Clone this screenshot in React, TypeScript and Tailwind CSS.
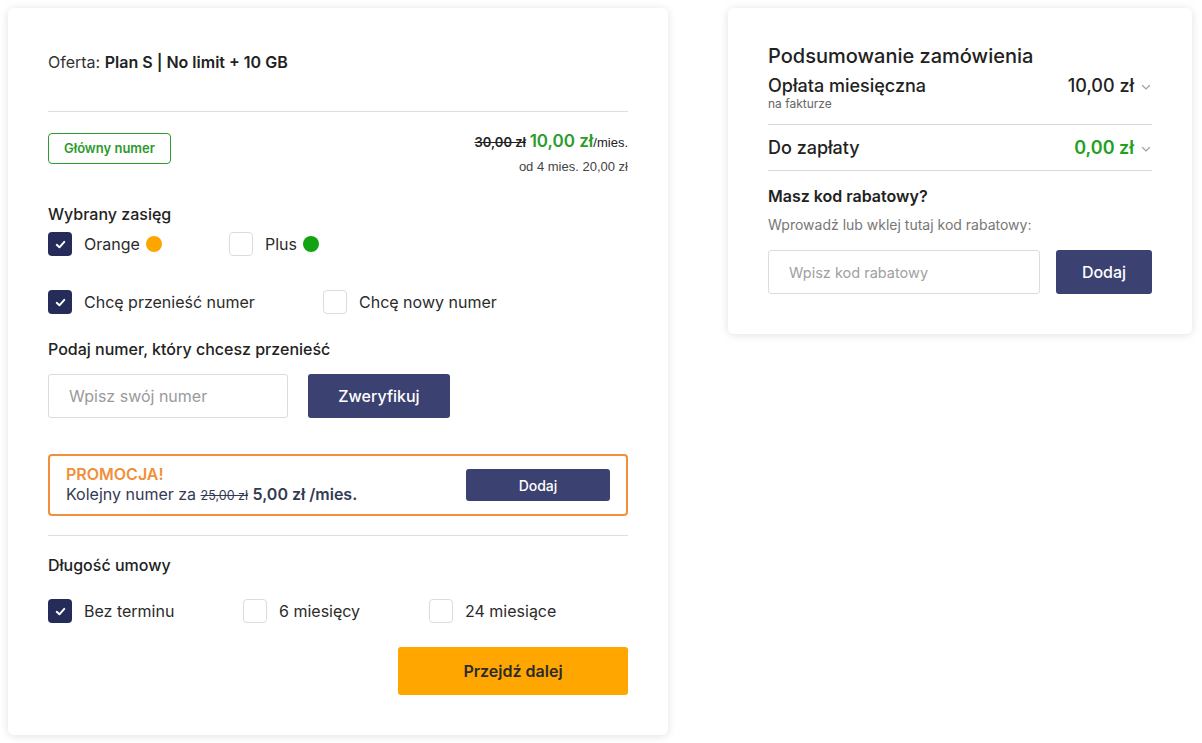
import React from 'react';

const Check = ({ checked }: { checked?: boolean }) =>
  checked ? (
    <span className="flex h-6 w-6 shrink-0 items-center justify-center rounded-[4px] bg-[#262c5a]">
      <svg viewBox="0 0 12 12" className="h-[13px] w-[13px]" fill="none" stroke="white" strokeWidth="1.8" strokeLinecap="round" strokeLinejoin="round">
        <path d="M2.5 6.3 5 8.6 9.5 3.6" />
      </svg>
    </span>
  ) : (
    <span className="h-6 w-6 shrink-0 rounded-[4px] border border-[#dcdcdc] bg-white" />
  );

const Option = ({ label, checked, className, children }: { label: string; checked?: boolean; className?: string; children?: React.ReactNode }) => (
  <label className={`flex items-center gap-3 text-[16px] leading-6 text-[#2b2b2b] ${className ?? ''}`}>
    <Check checked={checked} />
    <span>{label}</span>
    {children}
  </label>
);

const Chevron = () => (
  <svg viewBox="0 0 12 12" className="ml-1.5 mt-[2px] h-3 w-3" fill="none" stroke="#a0a0a0" strokeWidth="1.2" strokeLinecap="round">
    <path d="M2.5 4.5 6 8l3.5-3.5" />
  </svg>
);

export default function App() {
  return (
    <div className="min-h-screen bg-white font-['Inter',sans-serif] text-[#222]">
      <div className="flex items-start gap-[60px] pl-2 pr-[10px] pt-2">
        {/* offer configuration */}
        <div className="w-[660px] rounded-md bg-white px-10 pb-10 pt-[34px] shadow-[0_1px_8px_rgba(0,0,0,0.12)]">
          <p className="text-[16px] leading-10 text-[#333]">
            Oferta: <span className="font-semibold text-[#222]">Plan S | No limit + 10 GB</span>
          </p>
          <div className="mt-[29px] border-t border-[#dedede]" />

          <div className="mt-[21px] flex items-start justify-between">
            <span className="rounded-[4px] border border-[#2c9a2c] px-[15px] py-[5px] text-[13px] font-semibold leading-[19px] text-[#2c9a2c]">
              Główny numer
            </span>
            <div className="-mt-[2px] text-right font-['Liberation_Sans',Arial,sans-serif]">
              <p className="text-[13px] leading-5 text-[#222]">
                <span className="font-['Inter',sans-serif] font-semibold line-through">30,00 zł</span>{' '}
                <span className="font-['Inter',sans-serif] text-[17px] font-semibold text-[#2a9d2a]">10,00 zł</span>/mies.
              </p>
              <p className="mt-[4px] text-[13px] leading-5 text-[#444]">od 4 mies. 20,00 zł</p>
            </div>
          </div>

          <p className="mt-[25px] text-[16px] font-medium leading-6 text-[#222]">Wybrany zasięg</p>
          <div className="mt-[6px] flex items-center">
            <Option label="Orange" checked className="w-[181px]">
              <span className="-ml-[6px] h-4 w-4 rounded-full bg-[#ffa500]" />
            </Option>
            <Option label="Plus">
              <span className="-ml-[6px] h-4 w-4 rounded-full bg-[#11a311]" />
            </Option>
          </div>

          <div className="mt-[34px] flex items-center">
            <Option label="Chcę przenieść numer" checked className="w-[275px]" />
            <Option label="Chcę nowy numer" />
          </div>

          <p className="mt-[23px] text-[16px] font-medium leading-6 text-[#222]">Podaj numer, który chcesz przenieść</p>
          <div className="mt-[13px] flex gap-5">
            <input
              placeholder="Wpisz swój numer"
              className="h-11 w-[240px] rounded-[3px] border border-[#dcdcdc] px-5 text-[16px] placeholder:text-[#9a9a9a] focus:outline-none"
            />
            <button className="h-11 w-[142px] rounded-[3px] bg-[#3b4271] text-[16px] font-medium text-white">Zweryfikuj</button>
          </div>

          <div className="mt-9 flex items-center justify-between rounded-[4px] border-2 border-[#f0903a] px-4 py-2">
            <div className="leading-5">
              <p className="text-[16px] font-semibold text-[#f0903a]">PROMOCJA!</p>
              <p className="text-[16px] text-[#333a55]">
                Kolejny numer za <span className="text-[12.5px] line-through">25,00 zł</span>{' '}
                <span className="font-semibold">5,00 zł /mies.</span>
              </p>
            </div>
            <button className="h-8 w-[144px] rounded-[3px] bg-[#3b4271] text-[14px] font-medium text-white">Dodaj</button>
          </div>

          <div className="mt-[19px] border-t border-[#dedede]" />

          <p className="mt-[17px] text-[16px] font-medium leading-6 text-[#222]">Długość umowy</p>
          <div className="mt-[22px] flex items-center">
            <Option label="Bez terminu" checked className="w-[195px]" />
            <Option label="6 miesięcy" className="w-[186px]" />
            <Option label="24 miesiące" />
          </div>

          <div className="mt-6 flex justify-end">
            <button className="h-12 w-[230px] rounded-[3px] bg-[#ffa600] text-[16px] font-semibold text-[#2b2b2b]">Przejdź dalej</button>
          </div>
        </div>

        {/* order summary */}
        <div className="w-[464px] rounded-md bg-white px-10 pb-10 pt-[34px] shadow-[0_1px_8px_rgba(0,0,0,0.12)]">
          <h2 className="text-[20px] font-medium leading-7 text-[#222]">Podsumowanie zamówienia</h2>
          <div className="flex items-start justify-between pt-1">
            <div>
              <p className="text-[18px] font-medium leading-6">Opłata miesięczna</p>
              <p className="text-[12px] leading-3 text-[#666]">na fakturze</p>
            </div>
            <p className="flex items-center text-[18px] font-medium leading-6">
              10,00 zł
              <Chevron />
            </p>
          </div>
          <div className="mt-[14px] border-t border-[#d8d8d8]" />
          <div className="flex items-center justify-between pb-[10px] pt-[11px]">
            <p className="text-[18px] font-medium leading-6">Do zapłaty</p>
            <p className="flex items-center text-[18px] font-semibold leading-6 text-[#22a022]">
              0,00 zł
              <Chevron />
            </p>
          </div>
          <div className="border-t border-[#d8d8d8]" />
          <p className="mt-[15px] text-[16px] font-semibold leading-5">Masz kod rabatowy?</p>
          <p className="mt-[9px] text-[14px] leading-5 text-[#777]">Wprowadź lub wklej tutaj kod rabatowy:</p>
          <div className="mt-[15px] flex gap-4">
            <input
              placeholder="Wpisz kod rabatowy"
              className="h-11 w-[272px] rounded-[3px] border border-[#dcdcdc] px-5 text-[14.5px] placeholder:text-[#a0a0a0] focus:outline-none"
            />
            <button className="h-11 flex-1 rounded-[3px] bg-[#3b4271] text-[16px] font-medium text-white">Dodaj</button>
          </div>
        </div>
      </div>
    </div>
  );
}
